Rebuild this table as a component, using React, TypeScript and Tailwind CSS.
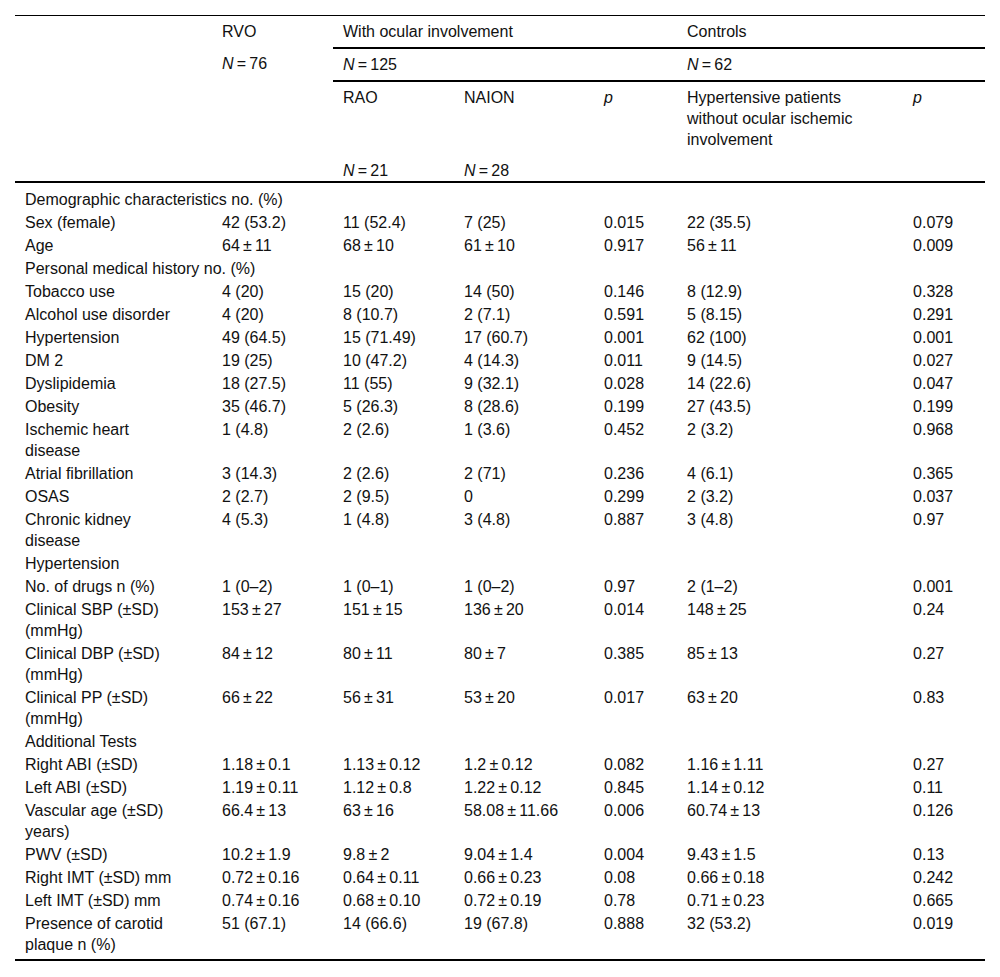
const pm = '\u2009±\u2009'

function N({ n }: { n: string }) {
  return (
    <>
      <i>N</i>
      {'\u2009=\u2009' + n}
    </>
  )
}

type Row = { section: string } | { cells: string[] }

const rows: Row[] = [
  { section: 'Demographic characteristics no. (%)' },
  { cells: ['Sex (female)', '42 (53.2)', '11 (52.4)', '7 (25)', '0.015', '22 (35.5)', '0.079'] },
  { cells: ['Age', `64${pm}11`, `68${pm}10`, `61${pm}10`, '0.917', `56${pm}11`, '0.009'] },
  { section: 'Personal medical history no. (%)' },
  { cells: ['Tobacco use', '4 (20)', '15 (20)', '14 (50)', '0.146', '8 (12.9)', '0.328'] },
  { cells: ['Alcohol use disorder', '4 (20)', '8 (10.7)', '2 (7.1)', '0.591', '5 (8.15)', '0.291'] },
  { cells: ['Hypertension', '49 (64.5)', '15 (71.49)', '17 (60.7)', '0.001', '62 (100)', '0.001'] },
  { cells: ['DM 2', '19 (25)', '10 (47.2)', '4 (14.3)', '0.011', '9 (14.5)', '0.027'] },
  { cells: ['Dyslipidemia', '18 (27.5)', '11 (55)', '9 (32.1)', '0.028', '14 (22.6)', '0.047'] },
  { cells: ['Obesity', '35 (46.7)', '5 (26.3)', '8 (28.6)', '0.199', '27 (43.5)', '0.199'] },
  { cells: ['Ischemic heart disease', '1 (4.8)', '2 (2.6)', '1 (3.6)', '0.452', '2 (3.2)', '0.968'] },
  { cells: ['Atrial fibrillation', '3 (14.3)', '2 (2.6)', '2 (71)', '0.236', '4 (6.1)', '0.365'] },
  { cells: ['OSAS', '2 (2.7)', '2 (9.5)', '0', '0.299', '2 (3.2)', '0.037'] },
  { cells: ['Chronic kidney disease', '4 (5.3)', '1 (4.8)', '3 (4.8)', '0.887', '3 (4.8)', '0.97'] },
  { section: 'Hypertension' },
  { cells: ['No. of drugs n (%)', '1 (0–2)', '1 (0–1)', '1 (0–2)', '0.97', '2 (1–2)', '0.001'] },
  { cells: ['Clinical SBP (±SD) (mmHg)', `153${pm}27`, `151${pm}15`, `136${pm}20`, '0.014', `148${pm}25`, '0.24'] },
  { cells: ['Clinical DBP (±SD) (mmHg)', `84${pm}12`, `80${pm}11`, `80${pm}7`, '0.385', `85${pm}13`, '0.27'] },
  { cells: ['Clinical PP (±SD) (mmHg)', `66${pm}22`, `56${pm}31`, `53${pm}20`, '0.017', `63${pm}20`, '0.83'] },
  { section: 'Additional Tests' },
  { cells: ['Right ABI (±SD)', `1.18${pm}0.1`, `1.13${pm}0.12`, `1.2${pm}0.12`, '0.082', `1.16${pm}1.11`, '0.27'] },
  { cells: ['Left ABI (±SD)', `1.19${pm}0.11`, `1.12${pm}0.8`, `1.22${pm}0.12`, '0.845', `1.14${pm}0.12`, '0.11'] },
  { cells: ['Vascular age (±SD) years)', `66.4${pm}13`, `63${pm}16`, `58.08${pm}11.66`, '0.006', `60.74${pm}13`, '0.126'] },
  { cells: ['PWV (±SD)', `10.2${pm}1.9`, `9.8${pm}2`, `9.04${pm}1.4`, '0.004', `9.43${pm}1.5`, '0.13'] },
  { cells: ['Right IMT (±SD) mm', `0.72${pm}0.16`, `0.64${pm}0.11`, `0.66${pm}0.23`, '0.08', `0.66${pm}0.18`, '0.242'] },
  { cells: ['Left IMT (±SD) mm', `0.74${pm}0.16`, `0.68${pm}0.10`, `0.72${pm}0.19`, '0.78', `0.71${pm}0.23`, '0.665'] },
  { cells: ['Presence of carotid plaque n (%)', '51 (67.1)', '14 (66.6)', '19 (67.8)', '0.888', '32 (53.2)', '0.019'] },
]

export default function App() {
  const th = 'pl-[10px] pt-[5px] pb-[5px] text-left font-normal align-top'
  return (
    <div className="bg-white min-h-[977px] px-[15px] pt-[15px] font-['Liberation_Sans',Arial,sans-serif] text-[16px] leading-[21px] text-[#111]">
      <table className="w-[970px] table-fixed border-collapse border-t border-b-2 border-black">
        <colgroup>
          <col className="w-[197px]" />
          <col className="w-[121px]" />
          <col className="w-[121px]" />
          <col className="w-[140px]" />
          <col className="w-[83px]" />
          <col className="w-[226px]" />
          <col className="w-[82px]" />
        </colgroup>
        <thead className="border-b-2 border-black">
          <tr>
            <th className={th}></th>
            <th className={th}>RVO</th>
            <th colSpan={3} className={`${th} border-b-2 border-black`}>With ocular involvement</th>
            <th colSpan={2} className={`${th} border-b-2 border-black`}>Controls</th>
          </tr>
          <tr>
            <th className={th}></th>
            <th className={th}><N n="76" /></th>
            <th colSpan={3} className={`${th} border-b-2 border-black`}><N n="125" /></th>
            <th colSpan={2} className={`${th} border-b-2 border-black`}><N n="62" /></th>
          </tr>
          <tr>
            <th className={th}></th>
            <th className={th}></th>
            <th className={th}>RAO</th>
            <th className={th}>NAION</th>
            <th className={th}><i>p</i></th>
            <th className={th}>
              <div className="max-w-[180px]">Hypertensive patients without ocular ischemic involvement</div>
            </th>
            <th className={th}><i>p</i></th>
          </tr>
          <tr>
            <th className="pl-[10px] pt-[5px]"></th>
            <th className="pl-[10px] pt-[5px]"></th>
            <th className="pl-[10px] pt-[5px] text-left font-normal"><N n="21" /></th>
            <th className="pl-[10px] pt-[5px] text-left font-normal"><N n="28" /></th>
            <th></th>
            <th></th>
            <th></th>
          </tr>
        </thead>
        <tbody>
          {rows.map((r, i) => {
            const pad = i === 0 ? 'pt-[6px] pb-px' : i === rows.length - 1 ? 'pt-px pb-[4px]' : 'py-px'
            if ('section' in r) {
              return (
                <tr key={i}>
                  <td colSpan={7} className={`pl-[10px] ${pad}`}>{r.section}</td>
                </tr>
              )
            }
            return (
              <tr key={i}>
                {r.cells.map((c, j) => (
                  <td key={j} className={`pl-[10px] align-top ${pad}`}>
                    {j === 0 ? <div className="max-w-[155px]">{c}</div> : c}
                  </td>
                ))}
              </tr>
            )
          })}
        </tbody>
      </table>
    </div>
  )
}
